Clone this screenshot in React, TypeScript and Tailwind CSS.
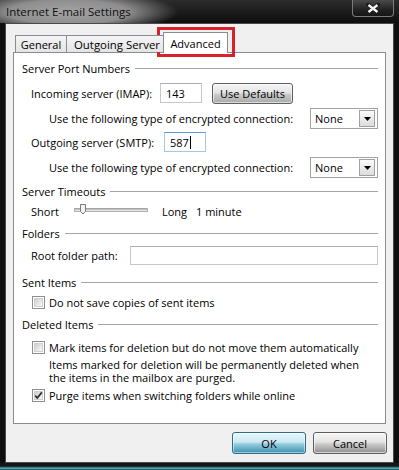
import React from "react";

function Header({ title, className }: { title: string; className: string }) {
  return (
    <div className={"flex items-center h-[14px] " + className}>
      <span className="whitespace-nowrap">{title}</span>
      <div className="flex-1 h-px bg-[#a5a5a5] ml-[5px]" />
    </div>
  );
}

function Check({ checked }: { checked?: boolean }) {
  return (
    <div className="w-[13px] h-[13px] border border-[#8e8f8f] bg-white p-px shrink-0 relative">
      <div className="w-full h-full border border-[#cfcfcf] bg-[linear-gradient(135deg,#cdcdcd_0%,#e6e6e6_55%,#f8f8f8_100%)]" />
      {checked && (
        <svg className="absolute left-0 top-0" width="11" height="11" viewBox="0 0 11 11">
          <path d="M2.2 5.6 L4.3 8 L8.8 2.4" stroke="#2b2b2b" strokeWidth="1.7" fill="none" />
        </svg>
      )}
    </div>
  );
}

function Dropdown() {
  return (
    <div className="w-[68px] h-[21px] border border-[#a3a3a3] bg-white flex items-center justify-between pl-[4px] pr-[2px] shrink-0">
      <span>None</span>
      <div className="w-[16px] h-[17px] border border-[#a0a0a0] bg-[linear-gradient(to_bottom,#fbfbfb,#dcdcdc)] flex items-center justify-center">
        <svg width="7" height="4" viewBox="0 0 7 4">
          <path d="M0 0 H7 L3.5 4 Z" fill="#000" />
        </svg>
      </div>
    </div>
  );
}

export default function App() {
  return (
    <div className="w-[399px] h-[470px] bg-[#0f0f0f] flex flex-col relative overflow-hidden text-[11px] leading-none text-black font-['Open_Sans',sans-serif]">
      {/* title bar */}
      <div className="h-[23px] flex items-start justify-between bg-[radial-gradient(ellipse_110px_22px_at_68px_12px,#a4a4a4_0%,#8e8e8e_55%,rgba(20,20,20,0)_100%),linear-gradient(to_bottom,#2c2c2c,#0d0d0d)]">
        <div className="pl-[6px] pt-[6px] text-[11.5px] text-[#111]">Internet E-mail Settings</div>
        <div className="mr-[5px] w-[42px] h-[17px] rounded-b-[4px] border border-t-0 border-[#7a7a7a] bg-[linear-gradient(to_bottom,#4a4a4a,#222_60%,#151515)] flex items-center justify-center">
          <svg width="14" height="11" viewBox="0 0 14 11">
            <path d="M2 1.5 L12 9.5 M12 1.5 L2 9.5" stroke="#1a1a1a" strokeWidth="4" strokeLinecap="round" />
            <path d="M2.5 2 L11.5 9 M11.5 2 L2.5 9" stroke="#f4f4f4" strokeWidth="2.3" />
          </svg>
        </div>
      </div>

      {/* client */}
      <div className="mx-[5px] h-[440px] border border-[#4a4a4a] bg-[#f0f0f0] flex flex-col pl-[7px] pr-[7px] pt-[8px]">
        {/* tabs */}
        <div className="h-[20px] flex items-end pl-[2px] relative z-10">
          <div className="h-[17px] w-[52px] border border-b-0 border-[#898c95] bg-[linear-gradient(to_bottom,#f4f4f4,#e4e4e4)] flex items-center justify-center pt-px">
            General
          </div>
          <div className="h-[17px] w-[98px] border border-b-0 border-l-0 border-[#898c95] bg-[linear-gradient(to_bottom,#f4f4f4,#e4e4e4)] flex items-center pl-[7px] pt-px overflow-hidden whitespace-nowrap text-[11.4px]">
            Outgoing Server
          </div>
          <div className="h-[21px] w-[65px] -ml-[2px] -mb-px border border-b-0 border-[#898c95] bg-white flex items-center justify-center">
            Advanced
          </div>
        </div>

        {/* panel */}
        <div className="h-[372px] border border-[#898c95] bg-white flex flex-col pl-[8px] pr-[7px]">
          <Header title="Server Port Numbers" className="mt-[8px]" />

          <div className="mt-[8px] h-[20px] flex items-center">
            <span className="ml-[9px] w-[129px]">Incoming server (IMAP):</span>
            <div className="w-[42px] h-[20px] border border-[#c5c8ce] border-t-[#abadb3] bg-white flex items-center pl-[5px]">143</div>
            <div className="ml-[10px] w-[81px] h-[21px] rounded-[3px] border border-[#5e5e5e] bg-[linear-gradient(to_bottom,#f6f6f6_0%,#e4e4e4_45%,#cbcbcb_55%,#a8a8a8_100%)] shadow-[inset_0_0_0_1px_rgba(255,255,255,0.6)] flex items-center justify-center">
              Use Defaults
            </div>
          </div>

          <div className="mt-[5px] h-[21px] flex items-center justify-between">
            <span className="ml-[27px]">Use the following type of encrypted connection:</span>
            <Dropdown />
          </div>

          <div className="mt-[3px] h-[20px] flex items-center">
            <span className="ml-[9px] w-[133px]">Outgoing server (SMTP):</span>
            <div className="w-[42px] h-[20px] border border-[#a4c9e3] border-t-[#569de5] bg-white flex items-center pl-[5px]">
              587<span className="ml-px w-px h-[13px] bg-black" />
            </div>
          </div>

          <div className="mt-[5px] h-[21px] flex items-center justify-between">
            <span className="ml-[27px]">Use the following type of encrypted connection:</span>
            <Dropdown />
          </div>

          <Header title="Server Timeouts" className="mt-[6px]" />

          <div className="mt-[5px] h-[16px] flex items-center">
            <span className="ml-[9px] w-[43px]">Short</span>
            <svg width="74" height="16" viewBox="0 0 74 16">
              <rect x="0.5" y="5.5" width="73" height="3" fill="#e6e6e6" stroke="#b0b0b0" />
              <line x1="1" y1="6" x2="73" y2="6" stroke="#9a9a9a" />
              <path d="M6.5 1.5 H11.5 V8.5 L9 11 L6.5 8.5 Z" fill="#f2f2f2" stroke="#7b7b7b" />
            </svg>
            <span className="ml-[14px] w-[34px]">Long</span>
            <span>1 minute</span>
          </div>

          <Header title="Folders" className="mt-[7px]" />

          <div className="mt-[6px] h-[19px] flex items-center">
            <span className="ml-[9px] w-[99px]">Root folder path:</span>
            <div className="flex-1 h-[19px] border border-[#c5c8ce] border-t-[#abadb3] bg-white" />
          </div>

          <Header title="Sent Items" className="mt-[10px]" />

          <div className="mt-[6px] h-[14px] flex items-center pl-[10px]">
            <Check />
            <span className="ml-[4px]">Do not save copies of sent items</span>
          </div>

          <Header title="Deleted Items" className="mt-[8px]" />

          <div className="mt-[9px] h-[14px] flex items-center pl-[10px]">
            <Check />
            <span className="ml-[4px]">Mark items for deletion but do not move them automatically</span>
          </div>

          <div className="mt-[4px] ml-[27px] h-[13px] flex items-center">
            Items marked for deletion will be permanently deleted when
          </div>
          <div className="ml-[27px] h-[13px] flex items-center">
            the items in the mailbox are purged.
          </div>

          <div className="mt-[4px] h-[14px] flex items-center pl-[10px]">
            <Check checked />
            <span className="ml-[4px]">Purge items when switching folders while online</span>
          </div>
        </div>

        {/* buttons */}
        <div className="mt-[8px] h-[22px] flex justify-end gap-[7px] -mr-px">
          <div className="w-[74px] h-[22px] rounded-[3px] border border-[#2c6f88] bg-[linear-gradient(to_bottom,#eaf6fb_0%,#cbe8f3_45%,#95cde0_55%,#3f91aa_100%)] shadow-[inset_0_0_0_1px_rgba(255,255,255,0.5)] flex items-center justify-center">
            OK
          </div>
          <div className="w-[74px] h-[22px] rounded-[3px] border border-[#5e5e5e] bg-[linear-gradient(to_bottom,#f6f6f6_0%,#e4e4e4_45%,#cbcbcb_55%,#8f8f8f_100%)] shadow-[inset_0_0_0_1px_rgba(255,255,255,0.6)] flex items-center justify-center">
            Cancel
          </div>
        </div>
      </div>

      {/* bottom frame */}
      <div className="flex-1 bg-[linear-gradient(to_bottom,#151515_0%,#151515_45%,#2d6c7a_60%,#5aa6b5_78%,#173238_100%)]" />

      {/* red highlight */}
      <div className="absolute left-[157px] top-[27px] w-[78px] h-[30px] border-[3px] border-[#d8222b]" />
    </div>
  );
}
